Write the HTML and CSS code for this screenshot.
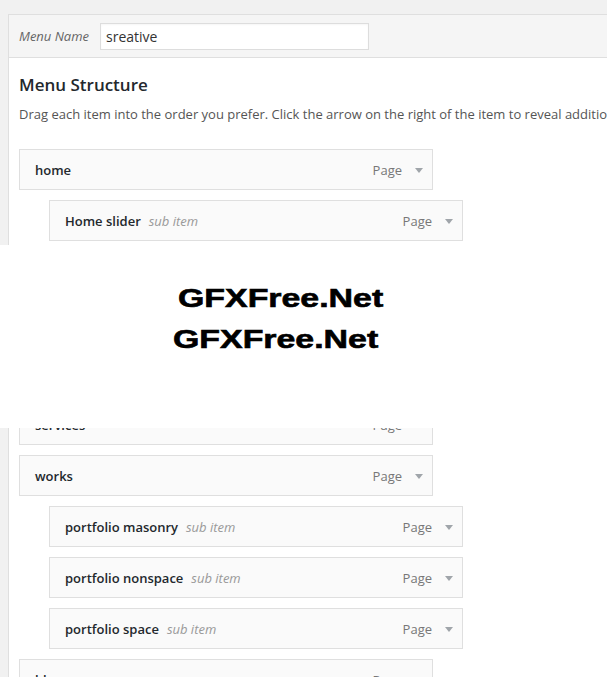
FILE: index.html
```html
<!DOCTYPE html>
<html>
<head>
<meta charset="utf-8">
<link rel="stylesheet" href="styles.css">
</head>
<body>
<div class="panel">
  <div class="header">
    <label class="name-label">Menu Name</label>
    <div class="name-input">sreative</div>
  </div>
  <div class="body">
    <h3 class="title">Menu Structure</h3>
    <p class="desc">Drag each item into the order you prefer. Click the arrow on the right of the item to reveal additional configuration options.</p>
    <ul class="menu">
      <li class="item"><span class="item-title">home</span><span class="controls"><span class="type">Page</span><span class="arrow"></span></span></li>
      <li class="item sub"><span class="item-title">Home slider</span><span class="subtag">sub item</span><span class="controls"><span class="type">Page</span><span class="arrow"></span></span></li>
      <li class="item sub"><span class="item-title">Home video</span><span class="subtag">sub item</span><span class="controls"><span class="type">Page</span><span class="arrow"></span></span></li>
      <li class="item"><span class="item-title">about</span><span class="controls"><span class="type">Page</span><span class="arrow"></span></span></li>
      <li class="item"><span class="item-title">team</span><span class="controls"><span class="type">Page</span><span class="arrow"></span></span></li>
      <li class="item"><span class="item-title">services</span><span class="controls"><span class="type">Page</span><span class="arrow"></span></span></li>
      <li class="item"><span class="item-title">works</span><span class="controls"><span class="type">Page</span><span class="arrow"></span></span></li>
      <li class="item sub"><span class="item-title">portfolio masonry</span><span class="subtag">sub item</span><span class="controls"><span class="type">Page</span><span class="arrow"></span></span></li>
      <li class="item sub"><span class="item-title">portfolio nonspace</span><span class="subtag">sub item</span><span class="controls"><span class="type">Page</span><span class="arrow"></span></span></li>
      <li class="item sub"><span class="item-title">portfolio space</span><span class="subtag">sub item</span><span class="controls"><span class="type">Page</span><span class="arrow"></span></span></li>
      <li class="item"><span class="item-title">blog</span><span class="controls"><span class="type">Page</span><span class="arrow"></span></span></li>
    </ul>
  </div>
</div>
<div class="watermark">
  <div class="wm-line wm-1">GFXFree.Net</div>
  <div class="wm-line wm-2">GFXFree.Net</div>
</div>
</body>
</html>
```

FILE: styles.css
```css
html, body {
  margin: 0;
  padding: 0;
  overflow: hidden;
  height: 677px;
}
body {
  background: #f1f1f1;
  font-family: "Open Sans", "Liberation Sans", sans-serif;
  font-size: 13px;
  color: #444;
  position: relative;
}
.panel {
  margin: 14px 0 0 8px;
  width: 720px;
  border-top: 1px solid #dfdfdf;
  border-left: 1px solid #dfdfdf;
  background: #fff;
}
.header {
  height: 42px;
  background: #f5f5f5;
  border-bottom: 1px solid #dfdfdf;
  display: flex;
  align-items: center;
  padding-left: 10px;
}
.name-label {
  font-style: italic;
  color: #666;
  font-size: 13px;
  width: 81px;
}
.name-input {
  width: 262px;
  height: 25px;
  border: 1px solid #ddd;
  background: #fff;
  font-size: 14px;
  line-height: 25px;
  padding-left: 5px;
  color: #333;
  box-shadow: inset 0 1px 2px rgba(0,0,0,0.04);
}
.body {
  padding: 15px 0 0 10px;
}
.title {
  margin: 0;
  font-size: 17px;
  line-height: 23px;
  font-weight: 600;
  color: #23282d;
}
.desc {
  margin: 9px 0 0;
  font-size: 13px;
  line-height: 18px;
  color: #555;
  white-space: nowrap;
}
.menu {
  list-style: none;
  margin: 26px 0 0;
  padding: 0;
}
.item {
  box-sizing: border-box;
  width: 414px;
  height: 41px;
  border: 1px solid #dfdfdf;
  background: #fafafa;
  display: flex;
  align-items: center;
  padding: 2px 9px 0 15px;
  margin-bottom: 10px;
  line-height: 37px;
}
.item.sub {
  margin-left: 30px;
}
.item-title {
  font-weight: 600;
  color: #23282d;
}
.subtag {
  font-style: italic;
  color: #999;
  margin-left: 8px;
}
.controls {
  margin-left: auto;
  display: flex;
  align-items: center;
}
.type {
  color: #777;
  margin-left: 2px;
}
.arrow {
  width: 0;
  height: 0;
  margin-left: 13px;
  border-left: 4px solid transparent;
  border-right: 4px solid transparent;
  border-top: 5px solid #a0a5aa;
}
.watermark {
  position: absolute;
  left: 0;
  top: 245px;
  width: 607px;
  height: 183px;
  background: #fff;
}
.wm-line {
  position: absolute;
  font-family: "Liberation Sans", Arial, sans-serif;
  font-weight: bold;
  font-size: 25px;
  line-height: 25px;
  color: #000;
  -webkit-text-stroke: 0.6px #000;
  transform: scaleX(1.355);
  transform-origin: left top;
  white-space: nowrap;
}
.wm-1 {
  left: 178px;
  top: 41px;
}
.wm-2 {
  left: 173px;
  top: 82px;
}
```
